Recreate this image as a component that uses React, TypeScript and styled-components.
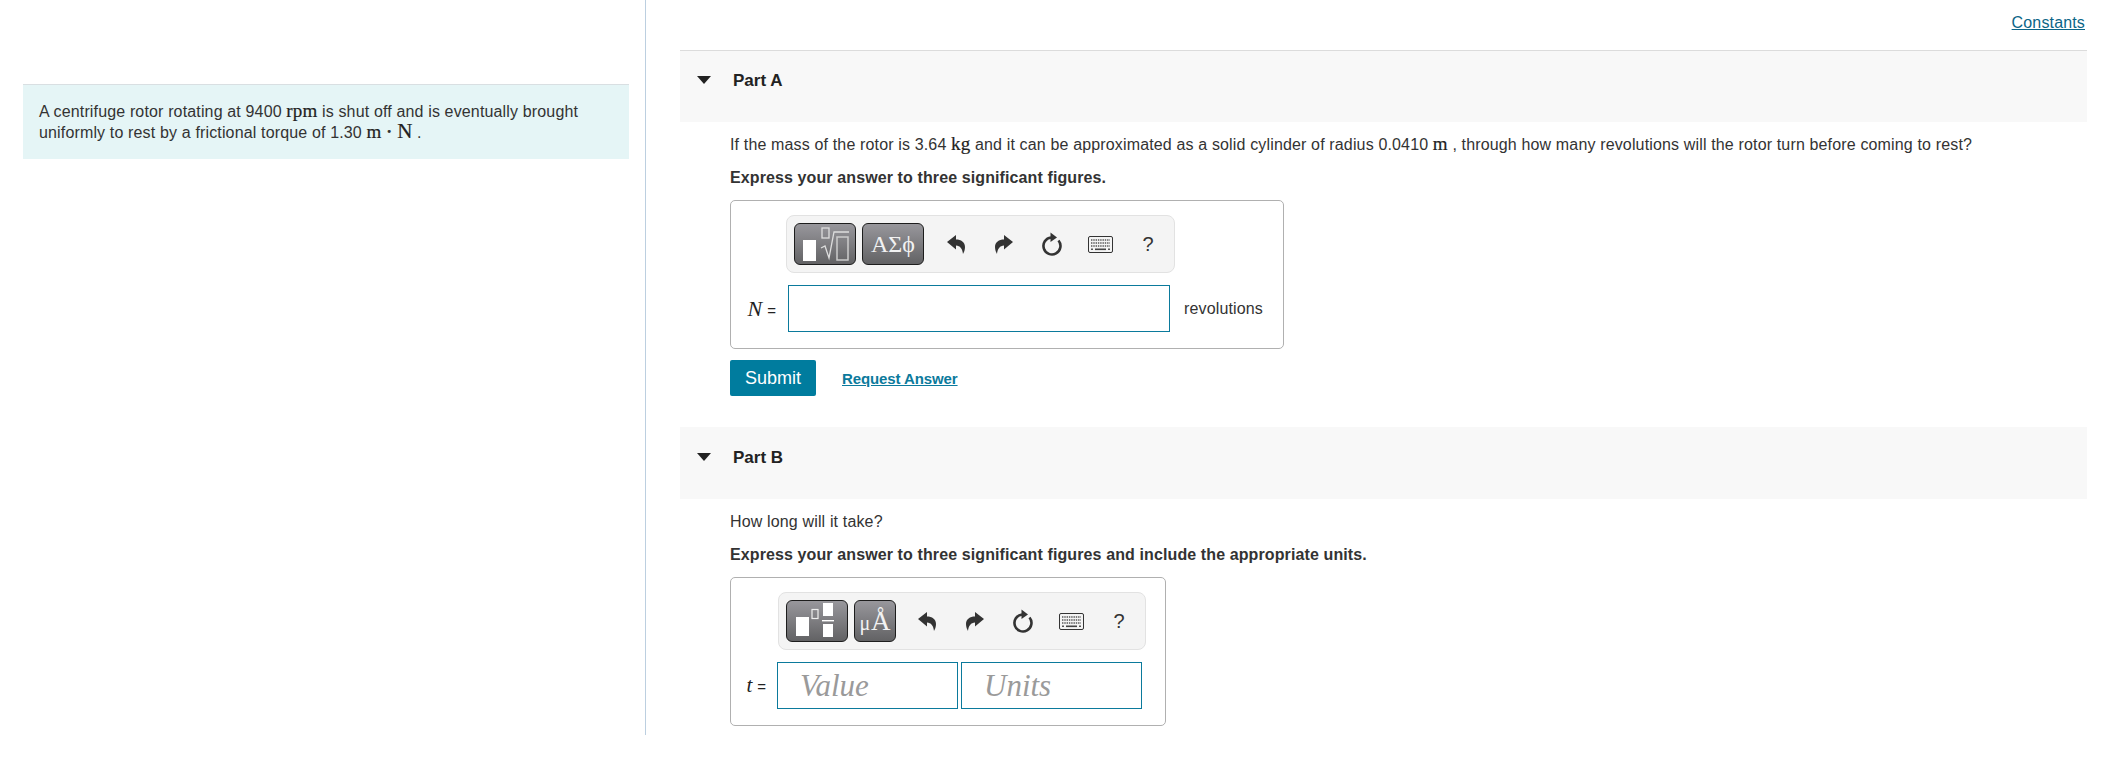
import React from "react";
import styled, { createGlobalStyle } from "styled-components";

const GlobalStyle = createGlobalStyle`
  html, body {
    margin: 0;
    padding: 0;
    background: #fff;
    color: #333;
    font-family: "Liberation Sans", Arial, sans-serif;
    font-size: 16px;
  }
`;

const UndoIcon = () => (
  <svg width="18" height="20" viewBox="0 0 18 20">
    <path d="M0 8 L9 1 V5.5 C14 5.5 18 8 18 13 C18 16 17 18 16 20 C15.5 15 13 11.5 9 11.5 V15.5 Z" fill="#333" />
  </svg>
);

const RedoIcon = () => (
  <svg width="18" height="20" viewBox="0 0 18 20">
    <path d="M18 8 L9 1 V5.5 C4 5.5 0 8 0 13 C0 16 1 18 2 20 C2.5 15 5 11.5 9 11.5 V15.5 Z" fill="#333" />
  </svg>
);

const ResetIcon = () => (
  <svg width="22" height="24" viewBox="0 0 22 24">
    <path d="M17.5 8.5 A8.5 8.5 0 1 1 10 5.5" fill="none" stroke="#333" strokeWidth="2.6" />
    <path d="M9.5 0.5 L16 5.5 L9.5 10 Z" fill="#333" />
  </svg>
);

const KeyboardIcon = () => (
  <svg width="25" height="17" viewBox="0 0 25 17">
    <rect x="0.5" y="0.5" width="24" height="16" rx="1.5" fill="#f4f4f4" stroke="#333" />
    <path d="M3 4 H22 M3 7 H22 M3 10 H22" stroke="#555" strokeWidth="1.4" strokeDasharray="1.4 0.9" />
    <path d="M7 13.3 H18" stroke="#444" strokeWidth="1.6" />
    <path d="M3 13.3 H5 M20 13.3 H22" stroke="#555" strokeWidth="1.4" />
  </svg>
);

const TemplatesRootIcon = () => (
  <svg width="58" height="36" viewBox="0 0 58 36">
    <rect x="7" y="14" width="13" height="21" fill="#fff" />
    <rect x="26" y="2" width="7" height="10" fill="none" stroke="#ddd" strokeWidth="1.3" />
    <path d="M25 22 L29 20 L33 32 L38 6 H53" fill="none" stroke="#ddd" strokeWidth="1.3" />
    <rect x="41" y="11" width="11" height="23" fill="none" stroke="#ccc" strokeWidth="1.5" />
  </svg>
);

const TemplatesFractionIcon = () => (
  <svg width="44" height="38" viewBox="0 0 44 38">
    <rect x="1" y="15" width="13" height="19" fill="#fff" />
    <rect x="17" y="7.5" width="6" height="9" fill="none" stroke="#eee" strokeWidth="1.2" />
    <rect x="28" y="1" width="10" height="13" fill="#fff" />
    <rect x="27" y="18" width="12" height="1.4" fill="#fff" />
    <rect x="28" y="22" width="10" height="13" fill="#fff" />
  </svg>
);

const ToolIconRow = ({ left }: { left: number }) => (
  <ToolIcons $left={left}>
    <ToolSlot>
      <UndoIcon />
    </ToolSlot>
    <ToolSlot>
      <RedoIcon />
    </ToolSlot>
    <ToolSlot>
      <ResetIcon />
    </ToolSlot>
    <ToolSlot>
      <KeyboardIcon />
    </ToolSlot>
    <ToolSlot>
      <HelpMark>?</HelpMark>
    </ToolSlot>
  </ToolIcons>
);

type Part = "A" | "B";

export default function App() {
  return (
    <>
      <GlobalStyle />
      <Page>
        <LeftColumn>
          <Intro>
            A centrifuge rotor rotating at 9400 <MathText>rpm</MathText> is shut off and is
            eventually brought uniformly to rest by a frictional torque of 1.30{" "}
            <MathText>m</MathText> <MathDot>·</MathDot> <MathText $large>N</MathText> .
          </Intro>
        </LeftColumn>
        <RightColumn>
          <ConstantsRow>
            <ConstantsLink href="#">Constants</ConstantsLink>
          </ConstantsRow>

          <PartHeading part="A" />
          <PartBody>
            <Question>
              If the mass of the rotor is 3.64 <MathText>kg</MathText> and it can be approximated
              as a solid cylinder of radius 0.0410 <MathText>m</MathText> , through how many
              revolutions will the rotor turn before coming to rest?
            </Question>
            <Instruction>Express your answer to three significant figures.</Instruction>
            <AnswerBox $width={554}>
              <Toolbar $width={389} $left={55}>
                <ToolButton $width={62}>
                  <TemplatesRootIcon />
                </ToolButton>
                <ToolButton $width={62}>
                  <SymbolLabel>ΑΣϕ</SymbolLabel>
                </ToolButton>
                <ToolIconRow left={2} />
              </Toolbar>
              <AnswerRow>
                <VarLabel $width={57} $pad={12}>
                  <VarName $size={22}>N</VarName>
                  <small>=</small>
                </VarLabel>
                <AnswerInput $width={382} aria-label="N" />
                <UnitLabel>revolutions</UnitLabel>
              </AnswerRow>
            </AnswerBox>
            <Actions>
              <SubmitButton>Submit</SubmitButton>
              <RequestLink href="#">Request Answer</RequestLink>
            </Actions>
          </PartBody>

          <PartHeading part="B" />
          <PartBody>
            <Question>How long will it take?</Question>
            <Instruction>
              Express your answer to three significant figures and include the appropriate units.
            </Instruction>
            <AnswerBox $width={436}>
              <Toolbar $width={368} $left={47}>
                <ToolButton $width={62}>
                  <TemplatesFractionIcon />
                </ToolButton>
                <ToolButton $width={42}>
                  <UnitGlyphs>
                    <small>μ</small>Å
                  </UnitGlyphs>
                </ToolButton>
                <ToolIconRow left={1} />
              </Toolbar>
              <AnswerRow $gap={3}>
                <VarLabel $width={47} $pad={8}>
                  <VarName $size={21}>t</VarName>
                  <small>=</small>
                </VarLabel>
                <AnswerInput $width={181} placeholder="Value" aria-label="Value" />
                <AnswerInput $width={181} placeholder="Units" aria-label="Units" />
              </AnswerRow>
            </AnswerBox>
          </PartBody>
        </RightColumn>
      </Page>
    </>
  );
}

const PartHeading = ({ part }: { part: Part }) => (
  <PartBar $bordered={part === "A"}>
    <Caret />
    <PartTitle>Part {part}</PartTitle>
  </PartBar>
);

const Page = styled.div`
  display: grid;
  grid-template-columns: 646px 1fr;
  height: 761px;
  overflow: hidden;
`;

const LeftColumn = styled.aside`
  box-sizing: border-box;
  height: 735px;
  padding: 84px 16px 0 23px;
  border-right: 1px solid #bccfe0;
`;

const Intro = styled.div`
  box-sizing: border-box;
  height: 75px;
  padding: 16px 16px 0;
  background: #e5f5f6;
  border-top: 1px solid #d9dfe2;
  line-height: 21px;
  font-size: 16px;
  letter-spacing: 0.15px;
`;

const MathText = styled.span<{ $large?: boolean }>`
  font-family: "Liberation Serif", "Times New Roman", serif;
  font-size: ${(p) => (p.$large ? 21 : 19)}px;
  line-height: 0;
  color: #222;
  -webkit-text-stroke: 0.2px #222;
`;

const MathDot = styled.span`
  font-family: "Liberation Serif", serif;
  font-size: 19px;
  font-weight: bold;
  line-height: 0;
`;

const RightColumn = styled.main`
  padding: 0 22px 0 34px;
`;

const ConstantsRow = styled.div`
  display: flex;
  justify-content: flex-end;
  height: 50px;
  padding-top: 13px;
  box-sizing: border-box;
`;

const ConstantsLink = styled.a`
  color: #0b6587;
  font-size: 16px;
  line-height: 19px;
  height: 19px;
  margin-right: 2px;
  letter-spacing: 0.15px;
`;

const PartBar = styled.div<{ $bordered: boolean }>`
  display: flex;
  align-items: flex-start;
  box-sizing: border-box;
  height: 72px;
  padding: 21px 0 0 17px;
  background: #f8f8f8;
  border-top: 1px solid ${(p) => (p.$bordered ? "#dcdcdc" : "#f8f8f8")};
`;

const Caret = styled.span`
  width: 0;
  height: 0;
  margin-top: 4px;
  border-left: 7px solid transparent;
  border-right: 7px solid transparent;
  border-top: 8px solid #222;
`;

const PartTitle = styled.h2`
  margin: 0 0 0 22px;
  font-size: 17px;
  line-height: 18px;
  font-weight: bold;
  color: #222;
`;

const PartBody = styled.section`
  padding: 11px 0 31px 50px;
`;

const Question = styled.p`
  margin: 0;
  font-size: 16px;
  line-height: 24px;
  letter-spacing: 0.15px;
`;

const Instruction = styled.p`
  margin: 10px 0 11px;
  font-size: 16px;
  line-height: 22px;
  font-weight: bold;
  color: #333;
  letter-spacing: 0.11px;
`;

const AnswerBox = styled.div<{ $width: number }>`
  box-sizing: border-box;
  width: ${(p) => p.$width}px;
  height: 149px;
  padding-top: 14px;
  border: 1px solid #b0b0b0;
  border-radius: 5px;
`;

const Toolbar = styled.div<{ $width: number; $left: number }>`
  box-sizing: border-box;
  display: flex;
  align-items: center;
  gap: 6px;
  width: ${(p) => p.$width}px;
  height: 58px;
  margin-left: ${(p) => p.$left}px;
  padding-left: 7px;
  background: #f4f4f4;
  border: 1px solid #e2e2e2;
  border-radius: 8px;
`;

const ToolButton = styled.div<{ $width: number }>`
  box-sizing: border-box;
  display: flex;
  align-items: center;
  justify-content: center;
  width: ${(p) => p.$width}px;
  height: 42px;
  background: linear-gradient(#98979c, #626264);
  border: 1px solid #1d1d1d;
  border-radius: 6px;
`;

const SymbolLabel = styled.span`
  font-family: "Liberation Serif", serif;
  font-size: 24px;
  color: #f2f2f2;
`;

const UnitGlyphs = styled.span`
  font-family: "Liberation Serif", serif;
  font-size: 27px;
  color: #f2f2f2;

  small {
    font-size: 20px;
    margin-right: 1px;
  }
`;

const ToolIcons = styled.div<{ $left: number }>`
  display: flex;
  align-items: center;
  margin-left: ${(p) => p.$left}px;
`;

const ToolSlot = styled.span`
  display: flex;
  align-items: center;
  justify-content: center;
  width: 48px;
  height: 30px;
`;

const HelpMark = styled.span`
  font-size: 20px;
  color: #333;
`;

const AnswerRow = styled.div<{ $gap?: number }>`
  display: flex;
  align-items: center;
  gap: ${(p) => p.$gap ?? 0}px;
  margin-top: 12px;
`;

const VarLabel = styled.span<{ $width: number; $pad: number }>`
  box-sizing: border-box;
  flex: none;
  width: ${(p) => p.$width - (p.$pad === 8 ? 4 : 0)}px;
  padding-right: ${(p) => p.$pad}px;
  text-align: right;
  color: #222;

  small {
    font-size: 15px;
  }
`;

const VarName = styled.i<{ $size: number }>`
  font-family: "Liberation Serif", serif;
  font-size: ${(p) => p.$size}px;
  margin-right: 5px;
`;

const AnswerInput = styled.input<{ $width: number }>`
  box-sizing: border-box;
  width: ${(p) => p.$width}px;
  height: 47px;
  padding: 0 22px;
  background: #fff;
  border: 1px solid #0b7a9c;
  border-radius: 0;
  outline: none;
  font-family: "Liberation Serif", serif;
  font-style: italic;
  font-size: 31px;

  &::placeholder {
    color: #9a9a9a;
    opacity: 1;
  }
`;

const UnitLabel = styled.span`
  margin-left: 14px;
  font-size: 16px;
  letter-spacing: 0.15px;
`;

const Actions = styled.div`
  display: flex;
  align-items: center;
  gap: 26px;
  margin-top: 11px;
`;

const SubmitButton = styled.button`
  width: 86px;
  height: 36px;
  padding: 0;
  background: #007c9e;
  border: 0;
  border-radius: 2px;
  color: #fff;
  font-family: "Liberation Sans", sans-serif;
  font-size: 18px;
`;

const RequestLink = styled.a`
  color: #0b7a9c;
  font-size: 15px;
  font-weight: bold;
  letter-spacing: -0.1px;
`;
